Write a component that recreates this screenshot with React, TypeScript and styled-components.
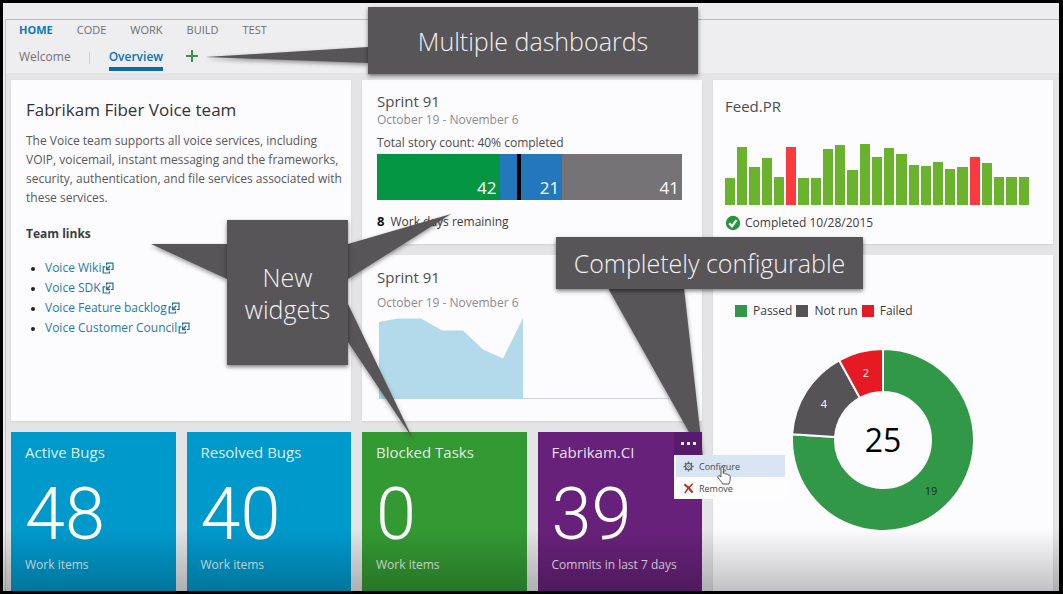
import React from "react";
import styled, { createGlobalStyle } from "styled-components";

const GlobalStyle = createGlobalStyle`
  *, *::before, *::after { box-sizing: border-box; }
  body {
    margin: 0;
    background: #000;
    font-family: "Open Sans", "Noto Sans", sans-serif;
    font-size: 12px;
    color: #3c3b3d;
  }
  h1, h2, p, ul { margin: 0; padding: 0; font-weight: 400; }
  button { font: inherit; color: inherit; border: 0; background: none; padding: 0; cursor: pointer; }
  a { text-decoration: none; color: inherit; }
`;

const Frame = styled.div`
  position: relative;
  display: flex;
  flex-direction: column;
  min-height: 100vh;
  border: 3px solid #000;
  border-right-width: 4px;
  padding: 16px 0 0 2px;
  background: #edecee;
  overflow: hidden;
`;

const Shell = styled.div`
  flex: 1;
  display: flex;
  flex-direction: column;
  border-top: 1px solid #b9b8ba;
  border-left: 1px solid #c4c3c6;
  background: #e4e3e6;
`;

const Header = styled.header`
  height: 53px;
  padding-left: 13px;
  background: #eeedf0;
`;

const HubNav = styled.nav`
  display: flex;
  gap: 24px;
  height: 20px;
  align-items: center;
  font-size: 11px;
  line-height: 20px;
`;

const HubLink = styled.a<{ $active?: boolean }>`
  color: ${(p) => (p.$active ? "#0b79bd" : "#6f6e70")};
  font-weight: ${(p) => (p.$active ? 700 : 400)};
`;

const DashNav = styled.nav`
  display: flex;
  align-items: center;
  height: 33px;
  padding-top: 2px;
`;

const DashLink = styled.a<{ $active?: boolean }>`
  line-height: 20px;
  padding-top: 2px;
  color: ${(p) => (p.$active ? "#0b72b5" : "#737274")};
  font-weight: ${(p) => (p.$active ? 600 : 400)};
  border-bottom: 4px solid ${(p) => (p.$active ? "#0b69a8" : "transparent")};
`;

const Divider = styled.span`
  width: 1px;
  height: 12px;
  margin: 0 19px 0 18px;
  background: #cfced1;
`;

const AddButton = styled.button`
  display: flex;
  margin: 0 0 4px 23px;
`;

const Board = styled.main`
  flex: 1;
  display: grid;
  grid-template-columns: repeat(6, 1fr);
  grid-template-rows: 164px 166px minmax(159px, 1fr);
  gap: 11px;
  padding: 7px 6px 0 5px;
`;

const Card = styled.section<{ $rows?: number }>`
  grid-column: span 2;
  grid-row: span ${(p) => p.$rows ?? 1};
  background: #fcfbfd;
  box-shadow: 0 1px 2px rgba(0, 0, 0, 0.08);
  padding: 12px 20px 0 15px;
`;

const TeamCard = styled(Card)`
  padding: 18px 4px 0 15px;
`;

const SprintCard = styled(Card)`
  padding-top: 11px;
`;

const TeamTitle = styled.h1`
  font-size: 17px;
  line-height: 24px;
  color: #333234;
`;

const Copy = styled.p`
  margin-top: 9px;
  line-height: 19px;
  color: #59585a;
`;

const LinksTitle = styled.h2`
  margin-top: 17px;
  font-size: 12px;
  line-height: 19px;
  font-weight: 700;
`;

const LinkList = styled.ul`
  margin-top: 15px;
  padding-left: 19px;
  li { line-height: 20px; font-size: 12px; }
  li::marker { font-size: 10px; color: #222; }
`;

const TeamLink = styled.a`
  display: inline-flex;
  align-items: center;
  gap: 1px;
  color: #1f7cae;
`;

const CardTitle = styled.h2`
  font-size: 15px;
  line-height: 20px;
  color: #4d4c4e;
`;

const Dates = styled.p<{ $gap?: number }>`
  margin-top: ${(p) => p.$gap ?? 1}px;
  line-height: 16px;
  color: #8d8c8e;
`;

const StoryCount = styled.p`
  margin-top: 7px;
  line-height: 16px;
  color: #4d4c4e;
`;

const StoryBar = styled.div`
  position: relative;
  display: flex;
  height: 46px;
  margin-top: 3px;
`;

const StoryPart = styled.div<{ $share: number; $color: string }>`
  flex: ${(p) => p.$share} 1 0;
  display: flex;
  justify-content: flex-end;
  align-items: flex-end;
  padding: 0 3px 1px 0;
  background: ${(p) => p.$color};
  color: #fff;
  font-size: 17px;
  line-height: 22px;
`;

const TodayMark = styled.div`
  position: absolute;
  top: 0;
  bottom: 0;
  left: 46%;
  width: 4px;
  background: #000;
`;

const Remaining = styled.p`
  margin-top: 12px;
  line-height: 18px;
  b { font-size: 13px; margin-right: 6px; color: #111; }
`;

const Burndown = styled.svg`
  display: block;
  width: 100%;
  height: 84px;
  margin-top: 4px;
`;

const FeedCard = styled(Card)`
  padding: 16px 24px 0 12px;
`;

const Columns = styled.div`
  display: flex;
  align-items: flex-end;
  gap: 2px;
  height: 61px;
  margin-top: 28px;
`;

const Column = styled.div<{ $height: number; $failed: boolean }>`
  flex: 1;
  height: ${(p) => p.$height}px;
  background: ${(p) => (p.$failed ? "#fb3a3d" : "#6ab42d")};
`;

const BuildStatus = styled.p`
  display: flex;
  align-items: center;
  gap: 4px;
  margin-top: 9px;
  line-height: 18px;
  color: #3f3e40;
`;

const ChartCard = styled(Card)`
  padding: 46px 22px 0;
`;

const Legend = styled.ul`
  display: flex;
  gap: 4px;
  list-style: none;
  line-height: 20px;
`;

const LegendItem = styled.li<{ $color: string }>`
  display: flex;
  align-items: center;
  gap: 6px;
  &::before { content: ""; width: 12px; height: 12px; background: ${(p) => p.$color}; }
`;

const Donut = styled.svg`
  display: block;
  width: 184px;
  height: 184px;
  margin: 27px auto 0;
`;

const Tile = styled.section<{ $color: string; $raised?: boolean }>`
  position: relative;
  z-index: ${(p) => (p.$raised ? 2 : "auto")};
  padding: 8px 14px 0;
  background: ${(p) => p.$color};
  color: rgba(255, 255, 255, 0.88);
`;

const TileTitle = styled.h2`
  font-size: 15px;
  line-height: 24px;
`;

const TileValue = styled.p`
  margin-top: 14px;
  font-family: Roboto, "Open Sans", sans-serif;
  font-size: 72px;
  line-height: 74px;
  font-weight: 300;
  color: #fff;
`;

const TileLabel = styled.p`
  margin-top: 5px;
  line-height: 16px;
`;

const MoreButton = styled.button`
  position: absolute;
  top: 0;
  right: 0;
  display: flex;
  align-items: center;
  justify-content: center;
  gap: 3px;
  width: 28px;
  height: 23px;
  background: #581a6c;
  i { width: 3px; height: 3px; background: #fff; }
`;

const Menu = styled.div`
  position: absolute;
  top: 23px;
  left: calc(100% - 28px);
  width: 112px;
  padding: 0 1px 0 2px;
  background: #fdfdfe;
  color: #4b4a4d;
`;

const MenuItem = styled.button<{ $hover?: boolean }>`
  display: flex;
  align-items: center;
  gap: 5px;
  width: 100%;
  height: 22px;
  padding-left: 7px;
  font-size: 9px;
  background: ${(p) => (p.$hover ? "#d9e5f2" : "transparent")};
`;

const Pointer = styled.svg`
  position: absolute;
  top: 11px;
  left: 43px;
  width: 14px;
  height: 19px;
`;

const Shade = styled.div`
  position: absolute;
  z-index: 3;
  left: 0;
  right: 0;
  bottom: 0;
  height: 62px;
  background: linear-gradient(rgba(0, 0, 0, 0), rgba(0, 0, 0, 0.23));
  pointer-events: none;
`;

const Annotations = styled.aside`
  position: absolute;
  z-index: 1;
  inset: 0;
  pointer-events: none;
`;

const Arrows = styled.svg`
  position: absolute;
  top: 0;
  left: 0;
  width: 860px;
  height: 460px;
  filter: drop-shadow(0 2px 2px rgba(0, 0, 0, 0.4));
`;

const Callout = styled.div<{ $x: number; $y: number; $w: number; $h: number }>`
  position: absolute;
  left: ${(p) => p.$x}px;
  top: ${(p) => p.$y}px;
  width: ${(p) => p.$w}px;
  height: ${(p) => p.$h}px;
  display: flex;
  align-items: center;
  justify-content: center;
  text-align: center;
  background: #575558;
  box-shadow: 0 2px 4px rgba(0, 0, 0, 0.5);
  color: #f3f2f4;
  font-size: 25px;
  line-height: 32px;
  font-weight: 300;
`;

const hubs = ["HOME", "CODE", "WORK", "BUILD", "TEST"];
const teamLinks = ["Voice Wiki", "Voice SDK", "Voice Feature backlog", "Voice Customer Council"];
const builds = [27, 58, 38, 47, 28, 58, 27, 27, 56, 60, 35, 61, 48, 57, 51, 40, 39, 43, 36, 38, 48, 42, 28, 28, 28];
const failedBuilds = [5, 20];

const results = [
  { label: "Passed", count: 19, color: "#319847", text: "#12311a" },
  { label: "Not run", count: 4, color: "#555356", text: "#fff" },
  { label: "Failed", count: 2, color: "#e61a23", text: "#fff" },
];

function slicePath(from: number, to: number) {
  const at = (turn: number, r: number) => {
    const a = turn * Math.PI * 2;
    return `${(92 + r * Math.sin(a)).toFixed(2)} ${(92 - r * Math.cos(a)).toFixed(2)}`;
  };
  const large = to - from > 0.5 ? 1 : 0;
  return `M${at(from, 91)} A91 91 0 ${large} 1 ${at(to, 91)} L${at(to, 48)} A48 48 0 ${large} 0 ${at(from, 48)}Z`;
}

function ExternalIcon() {
  return (
    <svg width="12" height="12" viewBox="0 0 12 12" fill="none" stroke="#2a7098" aria-hidden="true">
      <path d="M4.600 3.500V1.200H11V7.500H8.800" strokeWidth="1.200" />
      <path d="M3.200 4.800H1.200V11H7.500V9.200" strokeWidth="1.200" />
      <path d="M8.300 3.700 5 7M4.600 4.300V7.500H8" strokeWidth="1.300" />
    </svg>
  );
}

function ResultsDonut() {
  const total = results.reduce((sum, r) => sum + r.count, 0);
  let turn = 0;
  const labels = [
    [140, 143],
    [33, 56],
    [75, 25],
  ];
  return (
    <Donut viewBox="0 0 184 184" role="img" aria-label="Test results">
      {results.map((r, i) => {
        const from = turn;
        turn += r.count / total;
        return (
          <g key={r.label}>
            <path d={slicePath(from, turn)} fill={r.color} stroke="#fcfbfd" strokeWidth="2" />
            <text x={labels[i][0]} y={labels[i][1]} dy="4" textAnchor="middle" fontSize="11" fill={r.text}>
              {r.count}
            </text>
          </g>
        );
      })}
      <text x="92" y="104" textAnchor="middle" fontSize="32" fill="#000">
        {total}
      </text>
    </Donut>
  );
}

export default function App() {
  return (
    <Frame>
      <GlobalStyle />
      <Shell>
        <Header>
          <HubNav aria-label="Hubs">
            {hubs.map((hub) => (
              <HubLink key={hub} href="#" $active={hub === "HOME"}>
                {hub}
              </HubLink>
            ))}
          </HubNav>
          <DashNav aria-label="Dashboards">
            <DashLink href="#">Welcome</DashLink>
            <Divider />
            <DashLink href="#" $active>
              Overview
            </DashLink>
            <AddButton aria-label="Add dashboard">
              <svg width="12" height="12" viewBox="0 0 12 12" stroke="#3b9440" strokeWidth="2">
                <path d="M6 0v12M0 6h12" />
              </svg>
            </AddButton>
          </DashNav>
        </Header>

        <Board>
          <TeamCard $rows={2}>
            <TeamTitle>Fabrikam Fiber Voice team</TeamTitle>
            <Copy>
              The Voice team supports all voice services, including VOIP, voicemail, instant messaging and the
              frameworks, security, authentication, and file services associated with these services.
            </Copy>
            <LinksTitle>Team links</LinksTitle>
            <LinkList>
              {teamLinks.map((name) => (
                <li key={name}>
                  <TeamLink href="#">
                    {name}
                    <ExternalIcon />
                  </TeamLink>
                </li>
              ))}
            </LinkList>
          </TeamCard>

          <SprintCard>
            <CardTitle>Sprint 91</CardTitle>
            <Dates>October 19 - November 6</Dates>
            <StoryCount>Total story count: 40% completed</StoryCount>
            <StoryBar>
              <StoryPart $share={42} $color="#039542">42</StoryPart>
              <StoryPart $share={21} $color="#2377bd">21</StoryPart>
              <StoryPart $share={41} $color="#757375">41</StoryPart>
              <TodayMark />
            </StoryBar>
            <Remaining>
              <b>8</b>Work days remaining
            </Remaining>
          </SprintCard>

          <FeedCard>
            <CardTitle>Feed.PR</CardTitle>
            <Columns>
              {builds.map((height, i) => (
                <Column key={i} $height={height} $failed={failedBuilds.includes(i)} />
              ))}
            </Columns>
            <BuildStatus>
              <svg width="16" height="16" viewBox="0 0 16 16" aria-hidden="true">
                <circle cx="8" cy="8" r="7.200" fill="#2b9340" />
                <path d="m4.200 8.200 2.800 3 4.500-6" fill="none" stroke="#fff" strokeWidth="2.200" />
              </svg>
              Completed 10/28/2015
            </BuildStatus>
          </FeedCard>

          <Card>
            <CardTitle>Sprint 91</CardTitle>
            <Dates $gap={8}>October 19 - November 6</Dates>
            <Burndown viewBox="0 0 305 84" preserveAspectRatio="none" role="img" aria-label="Sprint burndown">
              <path d="M2 83.500h290" stroke="#cfd3d8" />
              <path d="M2 7 21 3.500 44 3.500 65 15.500H86L106 34.500 126 43.500 146 3V84H2Z" fill="#b3daeb" />
            </Burndown>
          </Card>

          <ChartCard $rows={2}>
            <Legend>
              {results.map((r) => (
                <LegendItem key={r.label} $color={r.color}>
                  {r.label}
                </LegendItem>
              ))}
            </Legend>
            <ResultsDonut />
          </ChartCard>

          <Tile $color="#0099cc">
            <TileTitle>Active Bugs</TileTitle>
            <TileValue>48</TileValue>
            <TileLabel>Work items</TileLabel>
          </Tile>
          <Tile $color="#0099cc">
            <TileTitle>Resolved Bugs</TileTitle>
            <TileValue>40</TileValue>
            <TileLabel>Work items</TileLabel>
          </Tile>
          <Tile $color="#339933">
            <TileTitle>Blocked Tasks</TileTitle>
            <TileValue>0</TileValue>
            <TileLabel>Work items</TileLabel>
          </Tile>
          <Tile $color="#68217a" $raised>
            <TileTitle>Fabrikam.CI</TileTitle>
            <TileValue>39</TileValue>
            <TileLabel>Commits in last 7 days</TileLabel>
            <MoreButton aria-label="Widget actions">
              <i />
              <i />
              <i />
            </MoreButton>
            <Menu>
              <MenuItem $hover>
                <svg width="11" height="11" viewBox="0 0 12 12" fill="none" stroke="#66656a" aria-hidden="true">
                  <circle cx="6" cy="6" r="3.300" strokeWidth="1.400" />
                  <circle cx="6" cy="6" r="1" strokeWidth="0.800" />
                  <path
                    d="M6 .5v2M6 9.500v2M.5 6h2M9.500 6h2M2.100 2.100l1.400 1.400M8.500 8.500l1.400 1.400M2.100 9.900l1.400-1.400M8.500 3.500l1.400-1.400"
                    strokeWidth="1.500"
                  />
                </svg>
                Configure
              </MenuItem>
              <MenuItem>
                <svg width="11" height="11" viewBox="0 0 12 12" fill="none" stroke="#b7341d" aria-hidden="true">
                  <path d="M1.500 1.500C4 3 8 7 10.500 10.500" strokeWidth="2.400" />
                  <path d="M10.500 1C7 4 4 7.500 2 11" strokeWidth="1.600" />
                </svg>
                Remove
              </MenuItem>
              <Pointer viewBox="0 0 14 19" aria-hidden="true">
                <path
                  d="M4 11V2.200C4 .6 6.300.6 6.300 2.200V7.500C8 6.800 8.700 7.600 8.700 8.200 10 7.600 10.900 8.300 11 9.100 12.300 8.700 13.200 9.400 13.200 10.600V13.500C13.200 15.500 12 16 12 18H5.500C5 16 2.800 14.500 1 11.600 .3 10.200 1.800 9 3 10.100Z"
                  fill="#fff"
                  stroke="#55565c"
                />
              </Pointer>
            </Menu>
          </Tile>
        </Board>
      </Shell>

      <Annotations>
        <Arrows viewBox="0 0 860 460" fill="#575558" aria-hidden="true">
          <path d="M202 54 365 44V60Z" />
          <path d="M148 241H224V276Z" />
          <path d="M448 211 345 241V276Z" />
          <path d="M345 301V339L410 436Z" />
          <path d="M605 285H681L700 454Z" />
        </Arrows>
        <Callout $x={365} $y={4} $w={330} $h={67}>Multiple dashboards</Callout>
        <Callout $x={224} $y={217} $w={121} $h={145}>
          New
          <br />
          widgets
        </Callout>
        <Callout $x={553} $y={234} $w={307} $h={52}>Completely configurable</Callout>
      </Annotations>
      <Shade />
    </Frame>
  );
}
